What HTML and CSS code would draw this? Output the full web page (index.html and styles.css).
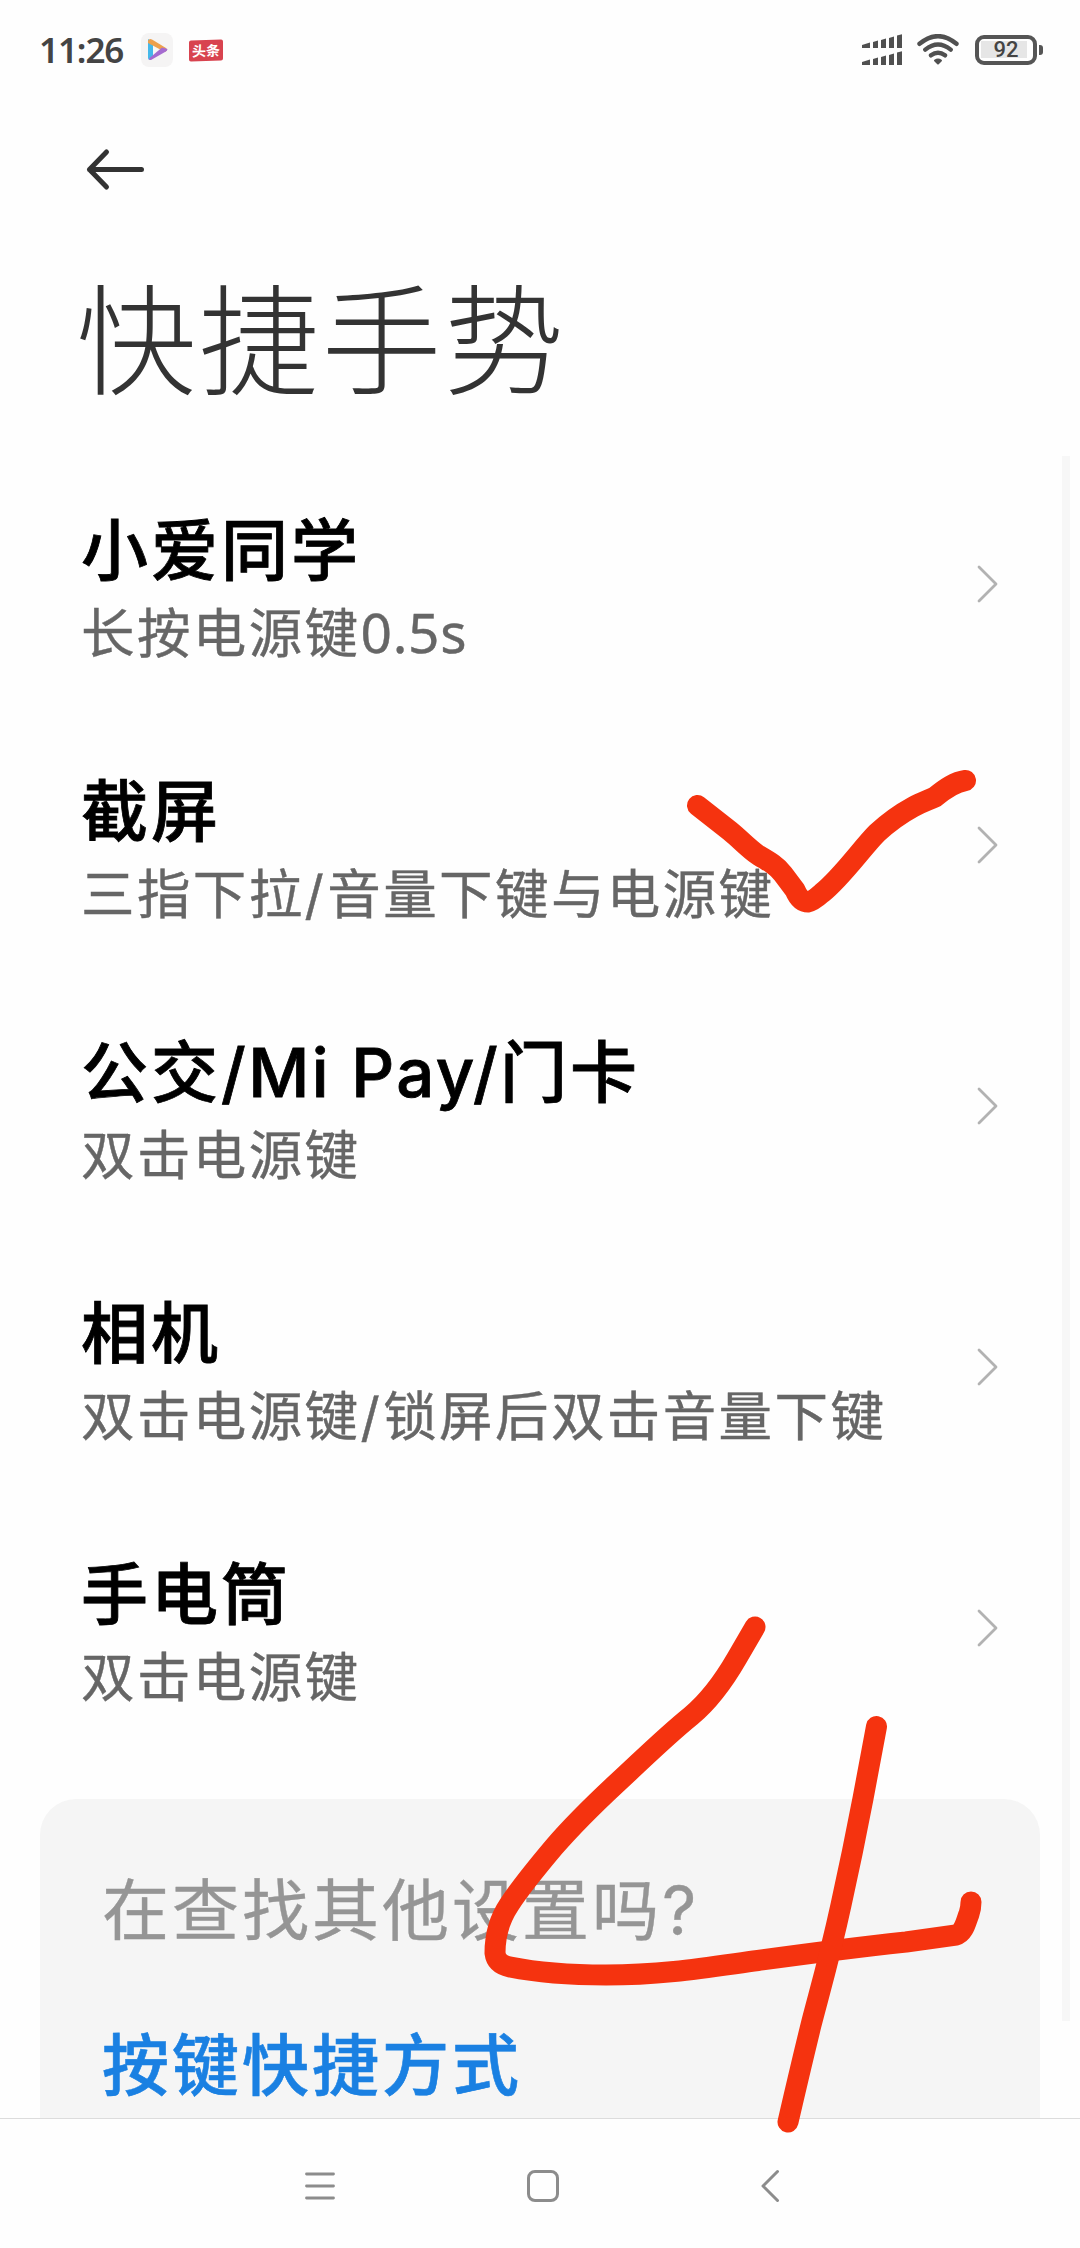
FILE: index.html
```html
<!DOCTYPE html>
<html lang="zh-CN">
<head>
<meta charset="utf-8">
<title>快捷手势</title>
<link rel="stylesheet" href="styles.css">
</head>
<body>
<div class="screen">
  <header class="status">
    <div class="status-left">
      <span class="clock">11:26</span>
      <svg class="app-video" width="32" height="34" viewBox="0 0 32 34">
        <rect width="32" height="34" rx="8" fill="#f5f4f4"/>
        <path d="M7 6 L12 9.500 V25 L9 27 Q7 27 7 25Z" fill="#45b8ea"/>
        <path d="M7 8 Q8 5 11 6.500 L25 15 Q27 17 24 19 L7 10Z" fill="#eda04c"/>
        <path d="M26.500 16 Q26.500 18 24 19 L10 27 Q8 27.500 8 25.500 L21 14.500Z" fill="#a56bd0"/>
        <path d="M12 13.500 L17.500 17 L12 20.500Z" fill="#f8f8f8"/>
      </svg>
      <span class="app-news">头条</span>
    </div>
    <div class="status-right">
      <svg width="40" height="32" viewBox="0 0 40 32" fill="#505050">
        <path d="M0 11 L8 8.500 V14 H0ZM11 8 L16 6.500 V14 H11ZM19 6 L24 4.500 V14 H19ZM27 4 L32 2.500 V14 H27ZM35 1.500 L40 .3 V14 H35Z"/>
        <path d="M0 28 L8 25.500 V31 H0ZM11 25 L16 23.500 V31 H11ZM19 23 L24 21.500 V31 H19ZM27 21 L32 19.500 V31 H27ZM35 18.500 L40 17.300 V31 H35Z"/>
      </svg>
      <svg class="wifi" width="42" height="32" viewBox="0 0 42 32" fill="none" stroke="#505050" stroke-width="4.400" stroke-linecap="round">
        <path d="M2.500 9.800 Q21 -5.500 39.500 9.800M8.300 15.600 Q21 5.500 33.700 15.600M14 21.300 Q21 16 28 21.300"/>
        <path d="M18 26.500 Q21 24.500 24 26.500 L21 29.500Z" fill="#505050" stroke-width="2" stroke-linejoin="round"/>
      </svg>
      <div class="battery"><span class="battery-level">92</span></div>
      <span class="battery-tip"></span>
    </div>
  </header>

  <div class="toolbar">
    <svg width="60" height="44" viewBox="0 0 60 44" fill="none" stroke="#333" stroke-width="5" stroke-linecap="round" stroke-linejoin="round">
      <path d="M21.500 5 L4.500 22.500 L21.500 40M4.500 22.500 H56.500"/>
    </svg>
  </div>

  <h1 class="title">快捷手势</h1>

  <main class="list">
    <section class="row">
      <div><h2>小爱同学</h2><p>长按电源键<span class="digits">0.5s</span></p></div>
      <svg class="chevron" viewBox="0 0 24 40"><path d="M3 3 L20 20 L3 37"/></svg>
    </section>
    <section class="row">
      <div><h2>截屏</h2><p>三指下拉<span class="slash">/</span>音量下键与电源键</p></div>
      <svg class="chevron" viewBox="0 0 24 40"><path d="M3 3 L20 20 L3 37"/></svg>
    </section>
    <section class="row">
      <div><h2>公交<span class="latin">/Mi Pay/</span>门卡</h2><p>双击电源键</p></div>
      <svg class="chevron" viewBox="0 0 24 40"><path d="M3 3 L20 20 L3 37"/></svg>
    </section>
    <section class="row">
      <div><h2>相机</h2><p>双击电源键<span class="slash">/</span>锁屏后双击音量下键</p></div>
      <svg class="chevron" viewBox="0 0 24 40"><path d="M3 3 L20 20 L3 37"/></svg>
    </section>
    <section class="row">
      <div><h2>手电筒</h2><p>双击电源键</p></div>
      <svg class="chevron" viewBox="0 0 24 40"><path d="M3 3 L20 20 L3 37"/></svg>
    </section>
  </main>

  <aside class="more">
    <p class="more-question">在查找其他设置吗<span class="mark">?</span></p>
    <a class="more-link">按键快捷方式</a>
  </aside>

  <nav class="navbar">
    <svg width="34" height="34" viewBox="0 0 34 34" fill="none" stroke="#8c8c8c" stroke-width="2.800" stroke-linecap="round">
      <path d="M3.500 5 H30.500M3.500 17 H30.500M3.500 29 H30.500"/>
    </svg>
    <svg class="home" width="34" height="34" viewBox="0 0 34 34" fill="none" stroke="#8c8c8c" stroke-width="3">
      <rect x="2.500" y="2.500" width="29" height="29" rx="6.500"/>
    </svg>
    <svg width="34" height="34" viewBox="0 0 34 34" fill="none" stroke="#8c8c8c" stroke-width="3" stroke-linecap="round" stroke-linejoin="round">
      <path d="M24.500 2.500 L10 17 L24.500 31.500"/>
    </svg>
  </nav>

  <div class="scrollbar"></div>
  <svg class="marks" viewBox="0 0 1080 2248">
    <path d="M697.500 805.500 L730 831 C741 840 748 848 758 855 C770 862 777 866 783 874 L795 890 Q800 902 808 902 Q813 901 822 893 C842 877 862 848 877 833 C890 821 902 813 913 807 C922 802 929 800 935 797 C946 788 955 782 965.500 780.500"/>
    <path d="M755 1627 L737 1658 C722 1684 709 1701 691 1716 C665 1737 642 1760 617 1783 C589 1809 573 1825 554 1847 C538 1866 522 1885 509 1905 C499 1920 495 1937 495 1953 C496 1961 501 1965 510 1967 C535 1972 570 1975 606 1975 C665 1975 710 1967 758 1960.500 C805 1954 860 1947 906 1942 L956 1935 C964 1933 966 1921 969 1914 Q971 1908 971 1902"/>
    <path d="M876.500 1726.500 L863 1798.500 C856 1835 851 1860 841 1905 C829 1960 820 1990 811 2025 Q800 2070 788 2122"/>
  </svg>
</div>
</body>
</html>
```
FILE: styles.css
```css
* { box-sizing: border-box; margin: 0; padding: 0; }

body {
  background: #fefefe;
  font-family: "Noto Sans CJK SC", "Noto Sans", sans-serif;
}

svg { display: block; flex: none; }

.screen {
  position: relative;
  width: 1080px;
  height: 2248px;
  overflow: hidden;
  display: flex;
  flex-direction: column;
}

.status {
  height: 100px;
  flex: none;
  padding: 0 37px 0 39px;
  display: flex;
  align-items: center;
  justify-content: space-between;
}
.status-left, .status-right { display: flex; align-items: center; }

.clock {
  width: 102px;
  font: 600 35px/48px "Noto Sans", sans-serif;
  letter-spacing: -1.1px;
  color: #444;
  white-space: nowrap;
}
.app-video { margin-right: 16px; }
.app-news {
  width: 34px;
  height: 21px;
  transform: skewY(-2deg);
  background: #d8434f;
  border-radius: 2px;
  color: #fff;
  font-size: 14px;
  font-weight: 700;
  line-height: 20px;
  text-align: center;
}
.wifi { margin: 0 16px 0 15px; }
.battery {
  width: 62px;
  height: 30px;
  border: 4.5px solid #555;
  border-radius: 9px;
  padding: 2px 6px 2px 2px;
}
.battery-level {
  display: block;
  height: 17px;
  background: #e6e6e6;
  padding-left: 4px;
  font: 500 22px/18px Roboto, sans-serif;
  color: #444;
  text-align: center;
}
.battery-tip {
  width: 4px;
  height: 10px;
  margin-left: 2px;
  border-radius: 0 3px 3px 0;
  background: #555;
}

.toolbar {
  height: 140px;
  flex: none;
  padding: 47px 0 0 85px;
}

.title {
  height: 214px;
  flex: none;
  padding-left: 76px;
  font-size: 120px;
  font-weight: 300;
  line-height: 189px;
  letter-spacing: 2.7px;
  color: #333;
}

.list { flex: none; }
.row {
  height: 261px;
  padding: 46px 80px 0 81px;
  display: flex;
  justify-content: space-between;
  white-space: nowrap;
}
.row h2 {
  height: 92px;
  font-size: 67px;
  font-weight: 500;
  line-height: 92px;
  letter-spacing: 3px;
  color: #000;
  -webkit-text-stroke: 0.8px #000;
}
.row p {
  height: 76px;
  font-size: 53.500px;
  font-weight: 400;
  line-height: 76px;
  letter-spacing: 2.4px;
  color: #666;
  -webkit-text-stroke: 0.4px #666;
}
.latin { font-family: Inter, sans-serif; font-weight: 500; letter-spacing: 2.4px; }
.digits { font-family: "Noto Sans", sans-serif; font-size: 55px; letter-spacing: 0.7px; }
.slash { font-family: Inter, sans-serif; letter-spacing: 3.4px; }
.chevron {
  width: 24px;
  height: 40px;
  margin-top: 64px;
  fill: none;
  stroke: #b2b2b2;
  stroke-width: 2.800;
  stroke-linecap: round;
  stroke-linejoin: round;
}

.more {
  flex: none;
  width: 1000px;
  height: 319px;
  margin: 40px 0 0 40px;
  padding: 61px 0 0 62px;
  border-radius: 36px 36px 0 0;
  background: #f5f5f5;
  font-size: 67px;
  line-height: 92px;
  letter-spacing: 3px;
}
.more-question { height: 155px; color: #959595; -webkit-text-stroke: 0.4px #959595; }
.mark { font-family: Inter, sans-serif; }
.more-link {
  display: block;
  font-weight: 500;
  color: #1a80e2;
  -webkit-text-stroke: 0.6px #1a80e2;
}

.navbar {
  flex: 1;
  border-top: 1px solid #dcdcdc;
  padding: 50px 293px 0 303px;
  display: flex;
  justify-content: space-between;
}
.home { margin-right: 4px; }

.scrollbar {
  position: absolute;
  left: 1062px;
  top: 456px;
  width: 8px;
  height: 1565px;
  background: #f7f7f7;
}

.marks {
  position: absolute;
  inset: 0;
  width: 1080px;
  height: 2248px;
  fill: none;
  stroke: #f5330f;
  stroke-width: 21;
  stroke-linecap: round;
  stroke-linejoin: round;
}
```
